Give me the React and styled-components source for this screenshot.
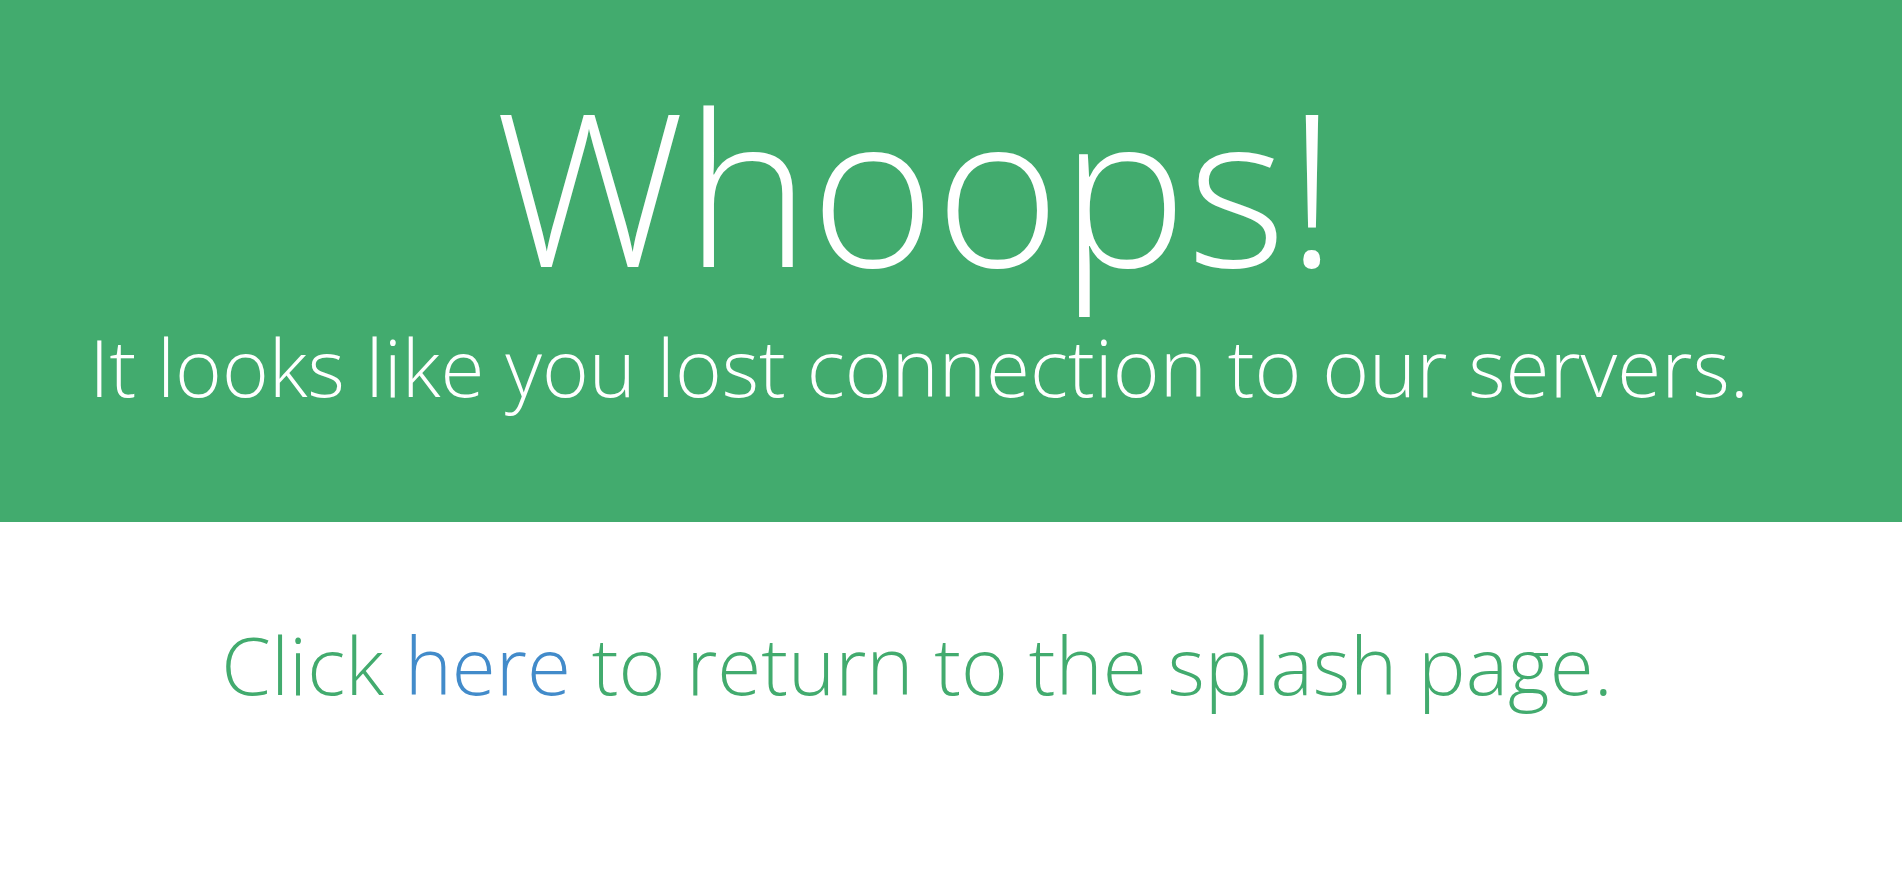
import React from 'react';
import styled, { createGlobalStyle } from 'styled-components';

const GlobalStyle = createGlobalStyle`
  html, body {
    margin: 0;
    padding: 0;
    background: #ffffff;
    font-family: "Open Sans", "Liberation Sans", sans-serif;
  }
`;

const Page = styled.main`
  display: flex;
  flex-direction: column;
  min-height: 890px;
`;

const Banner = styled.section`
  height: 522px;
  box-sizing: border-box;
  background-color: #42ab6e;
  padding: 78px 70px 0 0;
  display: flex;
  flex-direction: column;
  align-items: center;
  gap: 35px;
  color: #ffffff;
`;

const Title = styled.h1`
  margin: 0;
  font-size: 213px;
  font-weight: 300;
  line-height: 1;
`;

const Subtitle = styled.p`
  margin: 0;
  padding-left: 6px;
  font-size: 80px;
  font-weight: 300;
  line-height: 1;
  white-space: nowrap;
`;

const Message = styled.p`
  margin: 102px 0 0;
  padding-right: 68px;
  text-align: center;
  font-size: 80px;
  font-weight: 300;
  line-height: 1;
  color: #42ab6e;
  white-space: nowrap;
`;

const Link = styled.a`
  color: #428bca;
  text-decoration: none;
`;

export default function App() {
  return (
    <>
      <GlobalStyle />
      <Page>
        <Banner>
          <Title>Whoops!</Title>
          <Subtitle>It looks like you lost connection to our servers.</Subtitle>
        </Banner>
        <Message>
          Click <Link href="#">here</Link> to return to the splash page.
        </Message>
      </Page>
    </>
  );
}
